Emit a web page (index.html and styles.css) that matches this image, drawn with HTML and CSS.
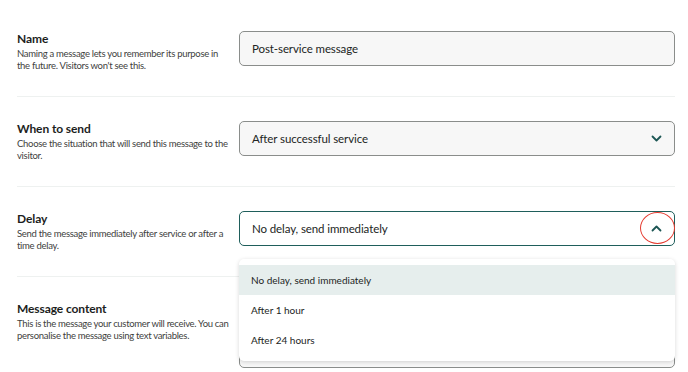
FILE: index.html
```html
<!DOCTYPE html>
<html lang="en">
<head>
<meta charset="utf-8">
<link rel="stylesheet" href="styles.css">
</head>
<body>
<div class="page">
  <div class="row">
    <div class="label">
      <div class="title">Name</div>
      <div class="desc">Naming a message lets you remember its purpose in the future. Visitors won't see this.</div>
    </div>
    <div class="field">
      <div class="input">Post-service message</div>
    </div>
  </div>
  <div class="row">
    <div class="label">
      <div class="title">When to send</div>
      <div class="desc">Choose the situation that will send this message to the visitor.</div>
    </div>
    <div class="field">
      <div class="input select">
        <span>After successful service</span>
        <svg class="chev" width="11" height="7" viewBox="0 0 11 7"><path d="M1.5 1.5l4 4 4-4" fill="none" stroke="#1c5654" stroke-width="1.8" stroke-linecap="round" stroke-linejoin="round"/></svg>
      </div>
    </div>
  </div>
  <div class="row">
    <div class="label">
      <div class="title">Delay</div>
      <div class="desc">Send the message immediately after service or after a time delay.</div>
    </div>
    <div class="field">
      <div class="input select open">
        <span>No delay, send immediately</span>
        <svg class="chev" width="11" height="7" viewBox="0 0 11 7"><path d="M1.5 5.5l4-4 4 4" fill="none" stroke="#1c5654" stroke-width="1.8" stroke-linecap="round" stroke-linejoin="round"/></svg>
        <div class="ring"></div>
      </div>
      <div class="menu">
        <div class="item active">No delay, send immediately</div>
        <div class="item">After 1 hour</div>
        <div class="item">After 24 hours</div>
      </div>
    </div>
  </div>
  <div class="row last">
    <div class="label">
      <div class="title">Message content</div>
      <div class="desc">This is the message your customer will receive. You can personalise the message using text variables.</div>
    </div>
    <div class="field">
      <div class="textarea"></div>
    </div>
  </div>
</div>
</body>
</html>
```
FILE: styles.css
```css
html, body {
  margin: 0;
  padding: 0;
  background: #ffffff;
}
body {
  font-family: Lato, "Open Sans", sans-serif;
  color: #1f2321;
}
.page {
  padding: 7px 13px 0 17px;
}
.row {
  display: grid;
  grid-template-columns: 222px 1fr;
  padding: 24px 0 24px;
  border-bottom: 1px solid #eef1f0;
}
.row.last {
  border-bottom: none;
  padding-bottom: 0;
}
.label {
  height: 41px;
}
.title {
  font-size: 12px;
  font-weight: 700;
  letter-spacing: -0.1px;
  line-height: 16px;
  color: #1c1e1d;
}
.desc {
  font-size: 9.5px;
  letter-spacing: -0.3px;
  line-height: 12px;
  color: #3e4140;
  max-width: 212px;
  margin-top: 1px;
}
.field {
  position: relative;
}
.input {
  box-sizing: border-box;
  height: 35px;
  border: 1px solid #8a8d8b;
  border-radius: 5px;
  background: #f7f7f7;
  font-size: 11.5px;
  letter-spacing: -0.1px;
  color: #222524;
  display: flex;
  align-items: center;
  padding: 0 12px;
}
.select {
  justify-content: space-between;
}
.open {
  background: #ffffff;
  border: 1.5px solid #1f5e5b;
  position: relative;
}
.ring {
  position: absolute;
  right: -1px;
  top: 0px;
  width: 35px;
  height: 32px;
  border: 1.3px solid #e53a2f;
  border-radius: 50%;
  box-sizing: border-box;
}
.menu {
  position: absolute;
  left: 0;
  right: 0;
  top: 48px;
  background: #ffffff;
  border-radius: 5px;
  box-shadow: 0 1px 4px rgba(0,0,0,0.16);
  padding: 6px 0;
  z-index: 5;
}
.item {
  height: 30px;
  display: flex;
  align-items: center;
  padding: 0 12px;
  font-size: 10px;
  color: #222524;
}
.item.active {
  background: #e6eeed;
}
.textarea {
  box-sizing: border-box;
  height: 67px;
  border: 1px solid #8a8d8b;
  border-radius: 5px;
  background: #f7f7f7;
}
```
